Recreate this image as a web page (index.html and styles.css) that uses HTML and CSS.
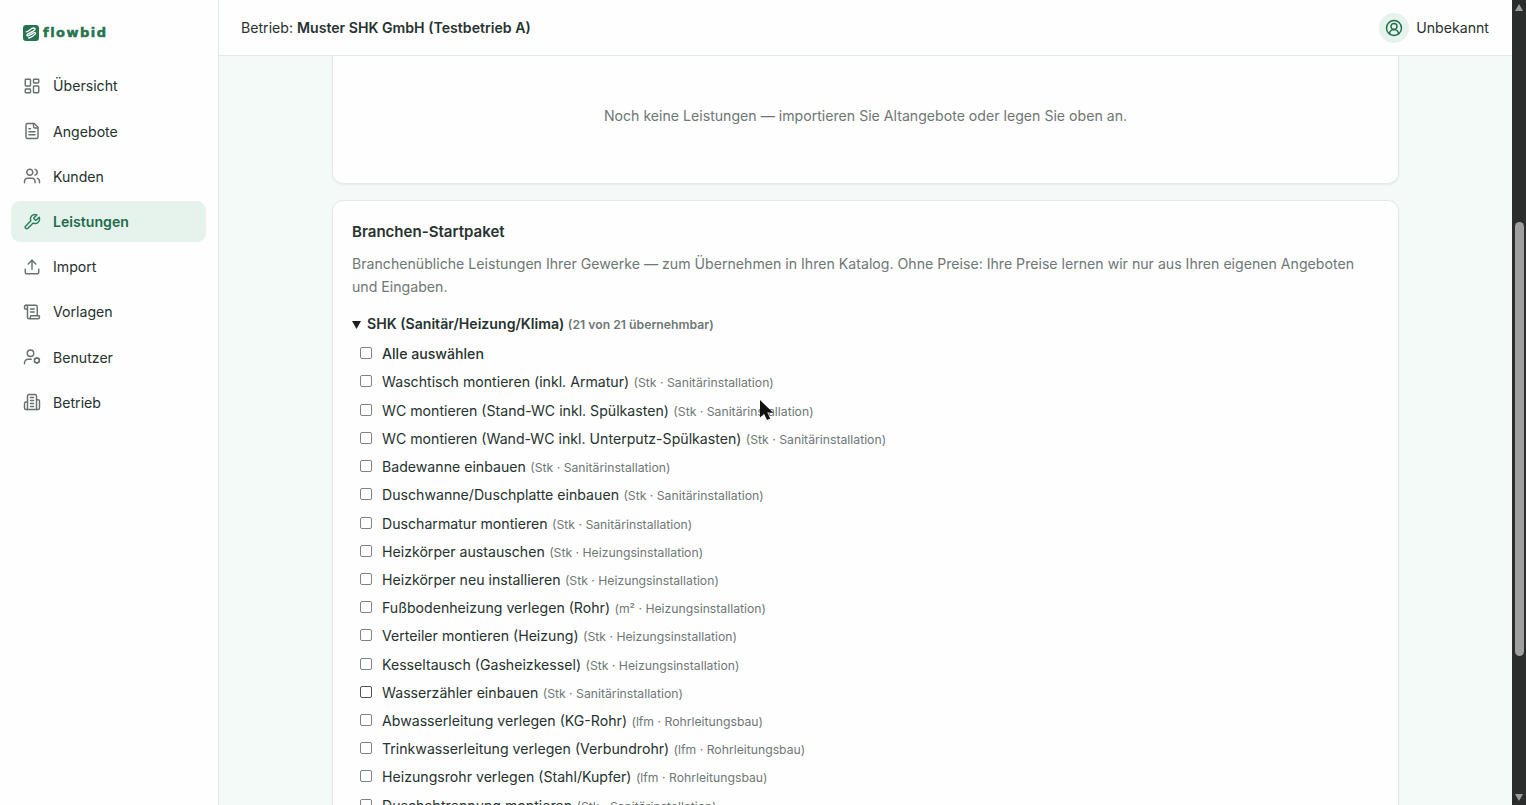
FILE: index.html
```html
<!DOCTYPE html>
<html lang="de">
<head>
  <meta charset="UTF-8" />
  <meta name="viewport" content="width=device-width, initial-scale=1.0"/>
  <title>flowbid – Leistungen</title>
  <link rel="stylesheet" href="styles.css">
</head>
<body>
  <aside class="sidebar">
    <div class="logo">
      <svg viewBox="0 0 16 16">
        <rect width="16" height="16" rx="3.2" fill="#26744f"/>
        <path d="M3.200 6.800C6 6.600 7.600 3.200 10.400 3c2.400 0 2.200 2 .2 2.900L5 8.900c-2 1.200-1.200 2.500.6 1.700l5-2.700c2-.9 2.800.8.9 1.900C9.500 11 8.500 12.800 5.600 13" fill="none" stroke="#fff" stroke-width="1.300" stroke-linecap="round"/>
      </svg>
      <span>flowbid</span>
    </div>
    <nav class="nav">
      <a class="nav-item"><svg class="icon" viewBox="0 0 24 24"><rect width="7" height="9" x="3" y="3" rx="1"/><rect width="7" height="5" x="14" y="3" rx="1"/><rect width="7" height="9" x="14" y="12" rx="1"/><rect width="7" height="5" x="3" y="16" rx="1"/></svg><span>Übersicht</span></a>
      <a class="nav-item"><svg class="icon" viewBox="0 0 24 24"><path d="M15 2H6a2 2 0 0 0-2 2v16a2 2 0 0 0 2 2h12a2 2 0 0 0 2-2V7Z"/><path d="M14 2v4a2 2 0 0 0 2 2h4"/><path d="M10 9H8"/><path d="M16 13H8"/><path d="M16 17H8"/></svg><span>Angebote</span></a>
      <a class="nav-item"><svg class="icon" viewBox="0 0 24 24"><path d="M16 21v-2a4 4 0 0 0-4-4H6a4 4 0 0 0-4 4v2"/><circle cx="9" cy="7" r="4"/><path d="M22 21v-2a4 4 0 0 0-3-3.870"/><path d="M16 3.130a4 4 0 0 1 0 7.750"/></svg><span>Kunden</span></a>
      <a class="nav-item active"><svg class="icon" viewBox="0 0 24 24"><path d="M14.700 6.300a1 1 0 0 0 0 1.400l1.600 1.600a1 1 0 0 0 1.400 0l3.770-3.770a6 6 0 0 1-7.940 7.940l-6.910 6.910a2.120 2.120 0 0 1-3-3l6.910-6.910a6 6 0 0 1 7.940-7.940l-3.760 3.760z"/></svg><span>Leistungen</span></a>
      <a class="nav-item"><svg class="icon" viewBox="0 0 24 24"><path d="M12 3v12"/><path d="m17 8-5-5-5 5"/><path d="M21 15v4a2 2 0 0 1-2 2H5a2 2 0 0 1-2-2v-4"/></svg><span>Import</span></a>
      <a class="nav-item"><svg class="icon" viewBox="0 0 24 24"><path d="M15 12h-5"/><path d="M15 8h-5"/><path d="M19 17V5a2 2 0 0 0-2-2H4"/><path d="M8 21h12a2 2 0 0 0 2-2v-1a1 1 0 0 0-1-1H11a1 1 0 0 0-1 1v1a2 2 0 1 1-4 0V5a2 2 0 1 0-4 0v2a1 1 0 0 0 1 1h3"/></svg><span>Vorlagen</span></a>
      <a class="nav-item"><svg class="icon" viewBox="0 0 24 24"><circle cx="10" cy="7" r="4.300"/><path d="M11 15H7a5 5 0 0 0-5 5v1"/><circle cx="18.500" cy="16.500" r="3.200"/><path d="M18.500 12.500v.8M18.500 19.700v.8M22 14.500l-.7.400M15.700 18.100l-.7.400M22 18.500l-.7-.4M15.700 14.900l-.7-.4"/></svg><span>Benutzer</span></a>
      <a class="nav-item"><svg class="icon" viewBox="0 0 24 24"><path d="M6 22V4a2 2 0 0 1 2-2h8a2 2 0 0 1 2 2v18Z"/><path d="M6 12H4a2 2 0 0 0-2 2v6a2 2 0 0 0 2 2h2"/><path d="M18 9h2a2 2 0 0 1 2 2v9a2 2 0 0 1-2 2h-2"/><path d="M10 6h4"/><path d="M10 10h4"/><path d="M10 14h4"/><path d="M10 18h4"/></svg><span>Betrieb</span></a>
    </nav>
  </aside>

  <div class="main">
    <header class="topbar">
      <div class="company">Betrieb: <strong>Muster SHK GmbH (Testbetrieb A)</strong></div>
      <div class="user">
        <span class="avatar"><svg class="icon" viewBox="0 0 24 24"><path d="M18 20a6 6 0 0 0-12 0"/><circle cx="12" cy="10" r="4"/><circle cx="12" cy="12" r="10"/></svg></span>
        <span>Unbekannt</span>
      </div>
    </header>

    <main class="content">
      <section class="card card-empty">
        <p>Noch keine Leistungen — importieren Sie Altangebote oder legen Sie oben an.</p>
      </section>

      <section class="card card-starter">
        <h2>Branchen-Startpaket</h2>
        <p class="description">Branchenübliche Leistungen Ihrer Gewerke — zum Übernehmen in Ihren Katalog. Ohne Preise: Ihre Preise lernen wir nur aus Ihren eigenen Angeboten und Eingaben.</p>
        <div class="summary"><svg class="marker" viewBox="0 0 9 8"><path d="M0 0h9L4.500 8z"/></svg><span class="trade">SHK (Sanitär/Heizung/Klima)</span> <small>(21 von 21 übernehmbar)</small></div>
        <label class="row select-all"><input type="checkbox"><span class="name">Alle auswählen</span></label>
        <label class="row"><input type="checkbox"><span class="name">Waschtisch montieren (inkl. Armatur)</span><small>(Stk · Sanitärinstallation)</small></label>
        <label class="row"><input type="checkbox"><span class="name">WC montieren (Stand-WC inkl. Spülkasten)</span><small>(Stk · Sanitärinstallation)</small></label>
        <label class="row"><input type="checkbox"><span class="name">WC montieren (Wand-WC inkl. Unterputz-Spülkasten)</span><small>(Stk · Sanitärinstallation)</small></label>
        <label class="row"><input type="checkbox"><span class="name">Badewanne einbauen</span><small>(Stk · Sanitärinstallation)</small></label>
        <label class="row"><input type="checkbox"><span class="name">Duschwanne/Duschplatte einbauen</span><small>(Stk · Sanitärinstallation)</small></label>
        <label class="row"><input type="checkbox"><span class="name">Duscharmatur montieren</span><small>(Stk · Sanitärinstallation)</small></label>
        <label class="row"><input type="checkbox"><span class="name">Heizkörper austauschen</span><small>(Stk · Heizungsinstallation)</small></label>
        <label class="row"><input type="checkbox"><span class="name">Heizkörper neu installieren</span><small>(Stk · Heizungsinstallation)</small></label>
        <label class="row"><input type="checkbox"><span class="name">Fußbodenheizung verlegen (Rohr)</span><small>(m² · Heizungsinstallation)</small></label>
        <label class="row"><input type="checkbox"><span class="name">Verteiler montieren (Heizung)</span><small>(Stk · Heizungsinstallation)</small></label>
        <label class="row"><input type="checkbox"><span class="name">Kesseltausch (Gasheizkessel)</span><small>(Stk · Heizungsinstallation)</small></label>
        <label class="row"><input type="checkbox" class="hovered"><span class="name">Wasserzähler einbauen</span><small>(Stk · Sanitärinstallation)</small></label>
        <label class="row"><input type="checkbox"><span class="name">Abwasserleitung verlegen (KG-Rohr)</span><small>(lfm · Rohrleitungsbau)</small></label>
        <label class="row"><input type="checkbox"><span class="name">Trinkwasserleitung verlegen (Verbundrohr)</span><small>(lfm · Rohrleitungsbau)</small></label>
        <label class="row"><input type="checkbox"><span class="name">Heizungsrohr verlegen (Stahl/Kupfer)</span><small>(lfm · Rohrleitungsbau)</small></label>
        <label class="row"><input type="checkbox"><span class="name">Duschabtrennung montieren</span><small>(Stk · Sanitärinstallation)</small></label>
      </section>
    </main>
  </div>

  <div class="scrollbar">
    <svg class="arrow" viewBox="0 0 8 7"><path d="M4 0 8 7H0z"/></svg>
    <div class="thumb"></div>
    <svg class="arrow" viewBox="0 0 8 7"><path d="M4 7 8 0H0z"/></svg>
  </div>

  <svg class="cursor" viewBox="0 0 15 22"><path d="M1 1v17.500l4-3.700 3 6.200 3.200-1.400-2.900-6.100h5.600z"/></svg>
</body>
</html>
```

FILE: styles.css
```css
:root {
  --green: #1f6b4a;
  --green-soft: #e5f3ec;
  --bg: #f3faf7;
  --text: #26332f;
  --muted: #6e7875;
  --line: #e0ebe7;
}

* {
  box-sizing: border-box;
}

body {
  margin: 0;
  height: 100vh;
  overflow: hidden;
  display: flex;
  background: var(--bg);
  color: var(--text);
  font-family: Inter, sans-serif;
  font-size: 14.130px;
}

.icon {
  width: 18px;
  height: 18px;
  flex: none;
  fill: none;
  stroke: currentColor;
  stroke-width: 1.9;
  stroke-linecap: round;
  stroke-linejoin: round;
}

.sidebar {
  width: 219px;
  flex: none;
  background: #fefefe;
  border-right: 1px solid var(--line);
  padding: 23px 12px 0 11px;
}

.logo {
  display: flex;
  align-items: center;
  gap: 4px;
  height: 19px;
  padding-left: 12px;
  color: #26744f;
  font-family: "DejaVu Sans", sans-serif;
  font-size: 13px;
  font-weight: 700;
  letter-spacing: 1.5px;
  -webkit-text-stroke: 0.5px #26744f;
}

.logo svg {
  width: 16px;
  height: 16px;
}

.nav {
  display: flex;
  flex-direction: column;
  gap: 4px;
  margin-top: 23.400px;
}

.nav-item {
  display: flex;
  align-items: center;
  gap: 12px;
  height: 41.200px;
  padding-left: 12px;
  border-radius: 9px;
}

.nav-item .icon {
  color: #66706d;
}

.nav-item.active {
  background: var(--green-soft);
  color: var(--green);
  font-weight: 600;
}

.nav-item.active .icon {
  color: #2a7d58;
}

.main {
  flex: 1;
  min-width: 0;
  display: flex;
  flex-direction: column;
}

.topbar {
  height: 56px;
  flex: none;
  display: flex;
  align-items: center;
  justify-content: space-between;
  padding: 0 23px 0 22px;
  background: #fefefe;
  border-bottom: 1px solid var(--line);
}

.company strong {
  font-weight: 600;
}

.user {
  display: flex;
  align-items: center;
  gap: 7px;
}

.avatar {
  width: 30px;
  height: 30px;
  display: flex;
  align-items: center;
  justify-content: center;
  border-radius: 50%;
  background: var(--green-soft);
  color: var(--green);
}

.content {
  flex: 1;
  min-height: 0;
  overflow: hidden;
  padding: 0 113px 0 113px;
}

.card {
  background: #fefefe;
  border: 1px solid var(--line);
  border-radius: 11px;
  box-shadow: 0 1px 2px rgba(20, 60, 45, 0.06);
}

.card-empty {
  height: 128px;
  border-top: 0;
  border-radius: 0 0 11px 11px;
  padding-top: 49px;
  text-align: center;
  color: var(--muted);
}

.card-empty p {
  margin: 0;
  line-height: 22px;
}

.card-starter {
  margin-top: 16px;
  padding: 18.500px 19px 0;
}

.card-starter h2 {
  margin: 0;
  font-size: 15.050px;
  font-weight: 600;
  line-height: 24px;
}

.description {
  margin: 9.500px 0 0;
  line-height: 22.600px;
  color: var(--muted);
}

.summary {
  margin-top: 14px;
  line-height: 24px;
  font-weight: 600;
}

.marker {
  width: 9px;
  height: 8px;
  margin-right: 6px;
  fill: #17211e;
}

small {
  font-size: 12.220px;
  color: var(--muted);
}

.row {
  display: flex;
  align-items: baseline;
  height: 28.230px;
  padding-left: 8px;
  line-height: 28.230px;
}

.row small {
  margin-left: 4.400px;
}

.row input {
  appearance: none;
  width: 12px;
  height: 12px;
  margin: 0 10px 0 0;
  border: 1px solid #7d8482;
  border-radius: 2px;
  background: #fff;
}

.row input.hovered {
  border-color: #4d5452;
}

.select-all {
  margin-top: 3px;
  font-weight: 500;
}

.scrollbar {
  width: 14px;
  flex: none;
  display: flex;
  flex-direction: column;
  align-items: center;
  justify-content: space-between;
  padding: 4px 0;
  background: #2b2d2c;
}

.scrollbar .arrow {
  width: 8px;
  height: 7px;
  fill: #9b9b9b;
}

.thumb {
  width: 9px;
  height: 434px;
  margin-top: 73px;
  border-radius: 5px;
  background: #9f9f9f;
}

/* mouse pointer over the list */
.cursor {
  position: absolute;
  left: 759px;
  top: 399px;
  width: 15px;
  height: 22px;
  fill: #111;
}
```
